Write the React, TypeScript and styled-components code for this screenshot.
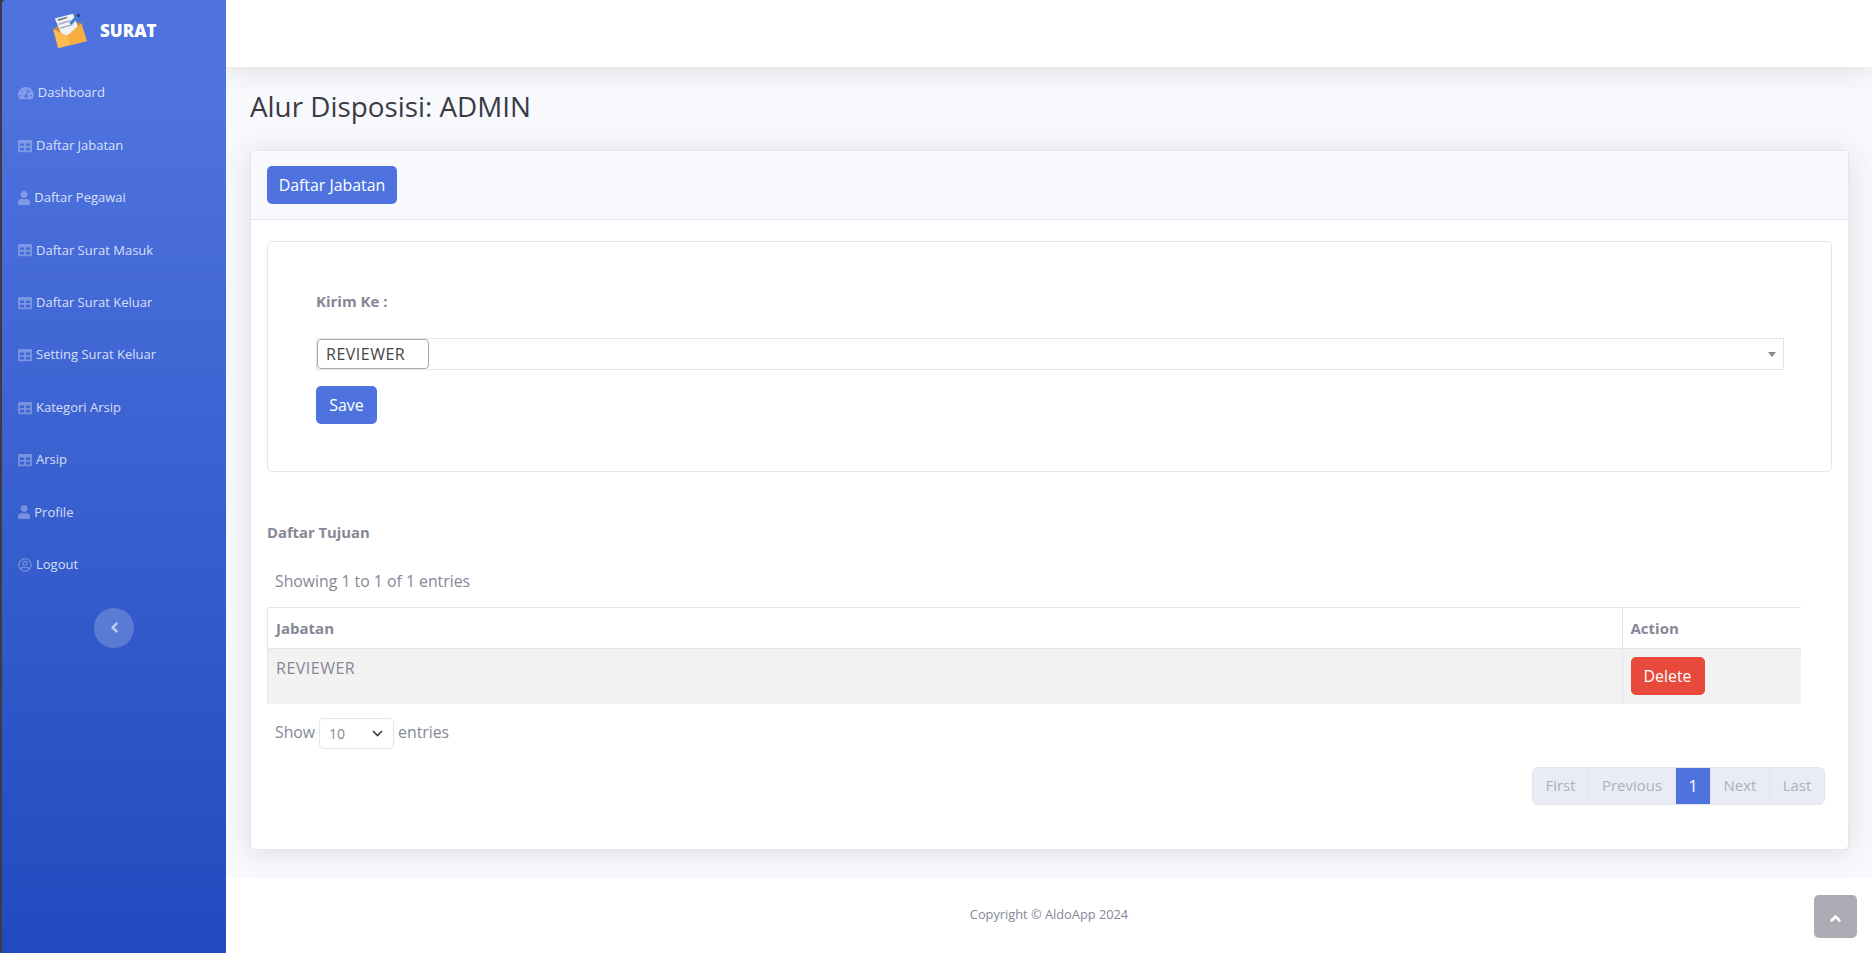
import React from 'react';
import styled, {createGlobalStyle} from 'styled-components';
import {FaTachometerAlt, FaTable, FaUser, FaRegUserCircle, FaAngleLeft, FaAngleUp} from 'react-icons/fa';

const GlobalStyle = createGlobalStyle`
  html, body { margin: 0; padding: 0; height: 100%; }
  body {
    background: #3a3b45;
    font-family: "Open Sans", "Noto Sans", "Liberation Sans", sans-serif;
    font-size: 16px;
    line-height: 1.5;
    color: #858796;
  }
  * { box-sizing: border-box; }
`;

const Wrapper = styled.div`
  display: flex;
  height: 953px;
  overflow: hidden;
  padding-left: 2px;
`;

const Sidebar = styled.aside`
  width: 224px;
  flex: none;
  position: relative;
  z-index: 1;
  background: linear-gradient(180deg, #4e73df 10%, #224abe 100%);
  border-top-left-radius: 4px;
  display: flex;
  flex-direction: column;
`;

const Brand = styled.div`
  height: 67px;
  display: flex;
  align-items: center;
  padding: 0 0 5px 51px;
  gap: 12px;
  color: #fff;
  font-weight: 800;
  font-size: 17px;
`;

const NavItem = styled.a`
  display: flex;
  align-items: center;
  height: 52.4px;
  padding-left: 16px;
  gap: 4px;
  font-size: 13px;
  color: rgba(255, 255, 255, 0.8);
`;

const NavIcon = styled.span<{$w: number}>`
  flex: none;
  display: block;
  width: ${p => p.$w}px;
  height: 14px;
  color: rgba(255, 255, 255, 0.3);
  svg { display: block; width: 100%; height: 100%; }
`;

const Toggle = styled.button`
  width: 40px;
  height: 40px;
  margin: 17px auto 0;
  border: 0;
  border-radius: 50%;
  background: rgba(255, 255, 255, 0.2);
  color: rgba(255, 255, 255, 0.6);
  display: flex;
  align-items: center;
  justify-content: center;
  font-size: 17px;
  padding: 0;
`;

const Main = styled.div`
  flex: 1;
  min-width: 0;
  background: #f8f9fc;
  display: flex;
  flex-direction: column;
  position: relative;
`;

const Topbar = styled.header`
  height: 67px;
  flex: none;
  background: #fff;
  box-shadow: 0 2px 28px rgba(58, 59, 69, 0.15);
`;

const Container = styled.div`
  flex: 1;
  padding: 21px 23px 28px 24px;
`;

const Title = styled.h1`
  margin: 0 0 24px;
  height: 38px;
  font-size: 27.8px;
  font-weight: 400;
  line-height: 36px;
  color: #3a3b45;
`;

const Card = styled.section`
  background: #fff;
  border: 1px solid #e3e6f0;
  border-radius: 5px;
  box-shadow: 0 2px 28px rgba(58, 59, 69, 0.15);
  height: 700px;
`;

const CardHeader = styled.div`
  height: 69px;
  background: #f8f9fc;
  border-bottom: 1px solid #e3e6f0;
  padding: 15px 16px;
`;

const CardBody = styled.div`
  padding: 21px 16px 0;
`;

const Button = styled.button<{$variant?: 'primary' | 'danger'; $w: number}>`
  display: block;
  width: ${p => p.$w}px;
  height: 38px;
  padding: 0;
  border: 0;
  border-radius: 5px;
  background: ${p => (p.$variant === 'danger' ? '#e74a3b' : '#4e73df')};
  color: #fff;
  font-family: inherit;
  font-size: 15.9px;
`;

const FormBox = styled.div`
  height: 231px;
  border: 1px solid #e3e6f0;
  border-radius: 5px;
  padding: 47px 47px 0 48px;
`;

const Label = styled.div`
  height: 24px;
  font-size: 15px;
  font-weight: 700;
  line-height: 24px;
  margin-bottom: 25px;
`;

const SelectBox = styled.div`
  position: relative;
  height: 32px;
  border: 1px solid #e3e6f0;
  margin-bottom: 16px;
`;

const Tag = styled.div`
  width: 112px;
  height: 30px;
  border: 1px solid #aaa;
  border-radius: 4px;
  color: #444;
  font-size: 16px;
  letter-spacing: 0.5px;
  line-height: 28px;
  padding-left: 8px;
`;

const Caret = styled.span`
  position: absolute;
  right: 7px;
  top: 13px;
  border-left: 4px solid transparent;
  border-right: 4px solid transparent;
  border-top: 5px solid #888;
`;

const SectionTitle = styled.div`
  margin-top: 48px;
  font-size: 14.8px;
  font-weight: 700;
  line-height: 24px;
`;

const Info = styled.div`
  margin: 25px 0 14px 8px;
  height: 24px;
  font-size: 15.8px;
  line-height: 24px;
`;

const Table = styled.table`
  width: 1534px;
  border-collapse: collapse;
  table-layout: fixed;
  th, td {
    text-align: left;
    vertical-align: top;
    border-left: 1px solid #e3e6f0;
  }
  th {
    height: 41px;
    padding: 8px;
    font-size: 15px;
    font-weight: 700;
    border-top: 1px solid #e3e6f0;
    border-bottom: 1px solid #e3e6f0;
    line-height: 24px;
  }
  td {
    height: 55px;
    padding: 8px;
    font-size: 16px;
    letter-spacing: 0.5px;
    line-height: 22px;
    background: #f2f2f2;
  }
`;

const LengthRow = styled.div`
  display: flex;
  align-items: center;
  gap: 4px;
  margin: 14px 0 0 8px;
  height: 31px;
  font-size: 15.8px;
`;

const LengthSelect = styled.div`
  width: 75px;
  height: 31px;
  border: 1px solid #e3e6f0;
  border-radius: 5px;
  display: flex;
  align-items: center;
  justify-content: space-between;
  padding: 0 10px 0 9px;
  font-size: 14px;
  svg { display: block; }
`;

const PagerRow = styled.div`
  display: flex;
  justify-content: flex-end;
  margin: 18px 7px 0 0;
`;

const Pager = styled.div`
  display: flex;
  height: 38px;
  border: 1px solid #e3e6f0;
  border-radius: 6px;
  overflow: hidden;
  background: #e9ecf4;
`;

const PageLink = styled.span<{$active?: boolean; $w: number}>`
  width: ${p => p.$w}px;
  display: flex;
  align-items: center;
  justify-content: center;
  font-size: ${p => (p.$active ? 16 : 15)}px;
  color: ${p => (p.$active ? '#fff' : '#adb0bd')};
  background: ${p => (p.$active ? '#4e73df' : 'transparent')};
  & + & { border-left: 1px solid #e3e6f0; }
`;

const Footer = styled.footer`
  height: 75px;
  flex: none;
  background: #fff;
  display: flex;
  align-items: center;
  justify-content: center;
  font-size: 12.8px;
  color: #858796;
  padding-bottom: 2px;
`;

const ScrollTop = styled.a`
  position: absolute;
  right: 15px;
  bottom: 15px;
  width: 43px;
  height: 43px;
  border-radius: 5px;
  background: rgba(90, 92, 105, 0.5);
  color: #fff;
  display: flex;
  align-items: center;
  justify-content: center;
  font-size: 17px;
  padding-top: 3px;
`;

const Logo = () => (
    <svg width="35" height="38" viewBox="70 40 105 115">
        <polygon points="70,92 112,62 155,75 160,100 85,125" fill="#c98a3c"/>
        <polygon points="75,60 130,45 148,92 100,118" fill="#eef0f3"/>
        <polygon points="84,62 112,54 113,58 85,67" fill="#667080"/>
        <polygon points="86,75 122,64 123,68 88,79" fill="#a4aab6"/>
        <polygon points="90,87 128,76 129,80 92,91" fill="#a4aab6"/>
        <line x1="150" y1="47" x2="122" y2="76" stroke="#3f7fca" strokeWidth="9"/>
        <line x1="150" y1="47" x2="143" y2="54" stroke="#2b4a78" strokeWidth="10"/>
        <polygon points="70,92 113,112 155,75 172,128 85,150" fill="#fdbb51"/>
        <polygon points="113,112 155,75 172,128 122,141" fill="#f6ae42"/>
    </svg>
);

const navItems = [
    {icon: <FaTachometerAlt/>, w: 15.75, label: 'Dashboard'},
    {icon: <FaTable/>, w: 14, label: 'Daftar Jabatan'},
    {icon: <FaUser/>, w: 12.25, label: 'Daftar Pegawai'},
    {icon: <FaTable/>, w: 14, label: 'Daftar Surat Masuk'},
    {icon: <FaTable/>, w: 14, label: 'Daftar Surat Keluar'},
    {icon: <FaTable/>, w: 14, label: 'Setting Surat Keluar'},
    {icon: <FaTable/>, w: 14, label: 'Kategori Arsip'},
    {icon: <FaTable/>, w: 14, label: 'Arsip'},
    {icon: <FaUser/>, w: 12.25, label: 'Profile'},
    {icon: <FaRegUserCircle/>, w: 14, label: 'Logout'},
];

const pages = [
    {label: 'First', w: 55},
    {label: 'Previous', w: 87},
    {label: '1', w: 35, active: true},
    {label: 'Next', w: 59},
    {label: 'Last', w: 55},
];

const App = () => {
    return (
        <Wrapper>
            <GlobalStyle/>
            <Sidebar>
                <Brand>
                    <Logo/>
                    <span>SURAT</span>
                </Brand>
                {navItems.map(item => (
                    <NavItem key={item.label}>
                        <NavIcon $w={item.w}>{item.icon}</NavIcon>
                        <span>{item.label}</span>
                    </NavItem>
                ))}
                <Toggle><FaAngleLeft/></Toggle>
            </Sidebar>
            <Main>
                <Topbar/>
                <Container>
                    <Title>Alur Disposisi: ADMIN</Title>
                    <Card>
                        <CardHeader>
                            <Button $w={130}>Daftar Jabatan</Button>
                        </CardHeader>
                        <CardBody>
                            <FormBox>
                                <Label>Kirim Ke :</Label>
                                <SelectBox>
                                    <Tag>REVIEWER</Tag>
                                    <Caret/>
                                </SelectBox>
                                <Button $w={61}>Save</Button>
                            </FormBox>
                            <SectionTitle>Daftar Tujuan</SectionTitle>
                            <Info>Showing 1 to 1 of 1 entries</Info>
                            <Table>
                                <colgroup>
                                    <col/>
                                    <col style={{width: 179}}/>
                                </colgroup>
                                <thead>
                                <tr>
                                    <th>Jabatan</th>
                                    <th>Action</th>
                                </tr>
                                </thead>
                                <tbody>
                                <tr>
                                    <td>REVIEWER</td>
                                    <td><Button $variant="danger" $w={74}>Delete</Button></td>
                                </tr>
                                </tbody>
                            </Table>
                            <LengthRow>
                                Show
                                <LengthSelect>
                                    10
                                    <svg width="11" height="7" viewBox="0 0 11 7" fill="none" stroke="#343a40" strokeWidth="1.6">
                                        <path d="M1 1 L5.5 5.5 L10 1"/>
                                    </svg>
                                </LengthSelect>
                                entries
                            </LengthRow>
                            <PagerRow>
                                <Pager>
                                    {pages.map(p => (
                                        <PageLink key={p.label} $w={p.w} $active={p.active}>{p.label}</PageLink>
                                    ))}
                                </Pager>
                            </PagerRow>
                        </CardBody>
                    </Card>
                </Container>
                <Footer>Copyright © AldoApp 2024</Footer>
                <ScrollTop><FaAngleUp/></ScrollTop>
            </Main>
        </Wrapper>
    );
};

export default App;
